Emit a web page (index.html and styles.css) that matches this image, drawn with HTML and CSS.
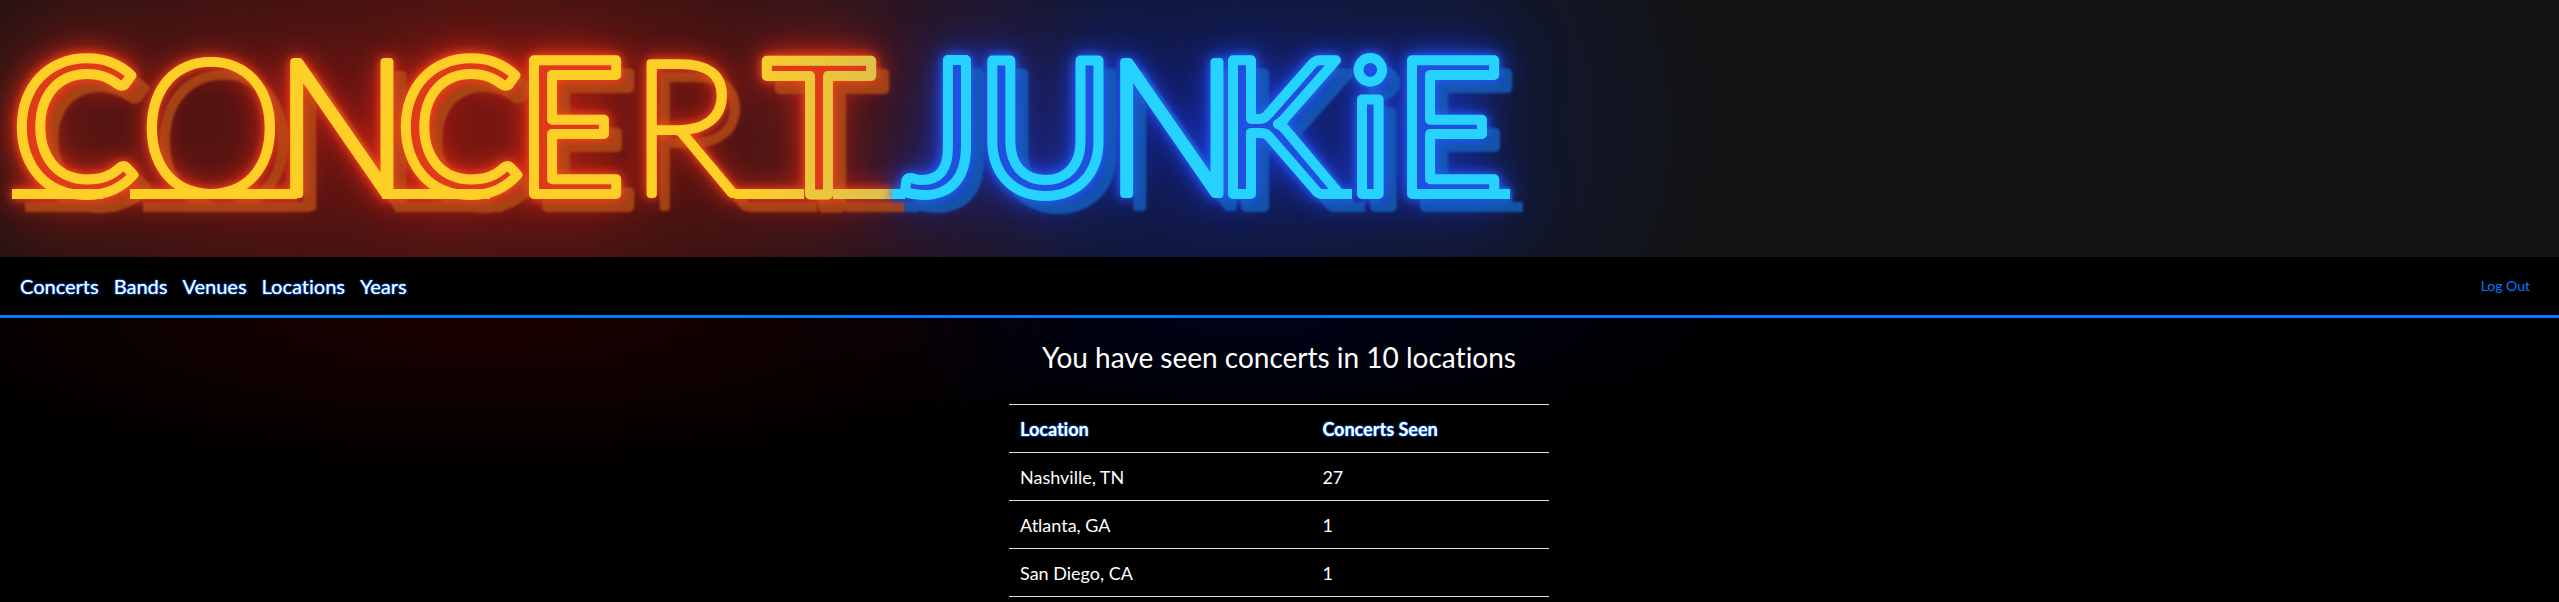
FILE: index.html
```html
<!DOCTYPE html>
<html lang="en">
<head>
<meta charset="utf-8">
<meta name="viewport" content="width=device-width, initial-scale=1">
<title>Concert Junkie</title>
<link rel="stylesheet" href="styles.css">
</head>
<body>
<header class="banner">
  <svg class="logo" viewBox="0 0 1560 257" role="img" aria-label="Concert Junkie">
    <defs>
      <linearGradient id="warm" gradientUnits="userSpaceOnUse" x1="740" y1="0" x2="900" y2="0">
        <stop offset="0" stop-color="#fdcf27"/>
        <stop offset="0.9" stop-color="#dcc04a"/>
        <stop offset="1" stop-color="#8fb08a"/>
      </linearGradient>
      <g id="concert">
        <text class="letters" y="194"><tspan class="tube" x="13">C</tspan><tspan class="thin" x="138">O</tspan><tspan class="thin narrow" x="276">N</tspan><tspan class="tube" x="397">C</tspan><tspan class="tube" x="517">E</tspan><tspan class="thin" x="629">R</tspan><tspan class="tube" x="764">T</tspan></text>
        <path class="link" d="M12 194H103M130 194H208M215 194H297M382 194H490M735 194H804M833 194H892"/>
      </g>
      <g id="junkie">
        <text class="letters" y="194"><tspan class="tube" x="903">J</tspan><tspan class="tube" x="977">U</tspan><tspan class="thin narrow" x="1106">N</tspan><tspan class="tube" x="1216">K</tspan><tspan class="tube" x="1348">i</tspan><tspan class="tube" x="1395">E</tspan></text>
        <path class="link" d="M892 194H905M1320 194H1352M1470 194H1510"/>
      </g>
    </defs>
    <g class="haze warm"><use href="#concert"/></g>
    <g class="haze cool"><use href="#junkie"/></g>
    <g class="halo warm"><use href="#concert"/></g>
    <g class="halo cool"><use href="#junkie"/></g>
    <g class="shade warm"><use href="#concert" x="13" y="13"/></g>
    <g class="shade cool"><use href="#junkie" x="13" y="13"/></g>
    <g class="neon warm"><use href="#concert"/></g>
    <g class="neon cool"><use href="#junkie"/></g>
  </svg>
</header>
<nav class="navbar">
  <ul class="menu">
    <li><a href="#concerts">Concerts</a></li>
    <li><a href="#bands">Bands</a></li>
    <li><a href="#venues">Venues</a></li>
    <li><a href="#locations">Locations</a></li>
    <li><a href="#years">Years</a></li>
  </ul>
  <a class="logout" href="#logout">Log Out</a>
</nav>
<main class="content">
  <h1 class="title">You have seen concerts in 10 locations</h1>
  <table class="locations">
    <thead>
      <tr><th scope="col">Location</th><th scope="col">Concerts Seen</th></tr>
    </thead>
    <tbody>
      <tr><td>Nashville, TN</td><td>27</td></tr>
      <tr><td>Atlanta, GA</td><td>1</td></tr>
      <tr><td>San Diego, CA</td><td>1</td></tr>
    </tbody>
  </table>
</main>
</body>
</html>
```

FILE: styles.css
```css
* { box-sizing: border-box; }

body {
  margin: 0;
  background: #000;
  color: #fff;
  font-family: Lato, "Liberation Sans", sans-serif;
  font-size: 18px;
  font-variant-ligatures: none;
  line-height: 24px;
}

.banner {
  overflow: hidden;
  background:
    radial-gradient(ellipse 680px 420px at 450px 125px, rgba(130, 20, 16, 0.7), rgba(96, 20, 18, 0.55) 50%, transparent),
    radial-gradient(ellipse 520px 420px at 1210px 125px, rgba(16, 30, 110, 0.7), rgba(16, 28, 80, 0.5) 55%, transparent),
    #131313;
}

.logo {
  display: block;
  width: 1560px;
  max-width: 100%;
  height: auto;
  overflow: visible;
}

.letters { font-family: Lato, sans-serif; }

.tube {
  font-size: 186px;
  font-weight: 400;
  stroke-width: 10px;
  stroke-linejoin: round;
}

.thin {
  font-size: 186px;
  font-weight: 100;
  fill: none;
  stroke-width: 8px;
  stroke-linejoin: round;
}

.narrow { font-family: Roboto, sans-serif; }

.link { fill: none; stroke-width: 10px; }

.warm { stroke: url(#warm); fill: #e03a1a; }
.cool { stroke: #26d3ff; fill: #2050e0; }

.neon.warm { filter: drop-shadow(0 0 5px #ff4a1c); }
.neon.cool { filter: drop-shadow(0 0 5px #2a62ff); }

.shade { filter: blur(1px); opacity: 0.85; }
.shade.warm { stroke: #b04a16; fill: #c83818; }
.shade.cool { stroke: #145cb8; fill: #1450c8; }

.halo { filter: blur(12px); }
.halo.warm { stroke: #f02c14; }
.halo.cool { stroke: #1c44f0; }

.haze { filter: blur(32px); }
.haze.warm { stroke: #c01810; }
.haze.cool { stroke: #1428c0; }

.navbar {
  display: flex;
  align-items: center;
  justify-content: space-between;
  min-height: 61px;
  padding: 0 29px 0 20px;
  border-bottom: 3px solid #007bff;
  background: #000;
}

.menu {
  display: flex;
  gap: 15px;
  margin: 0;
  padding: 0;
  list-style: none;
  font-size: 20px;
}

.menu a {
  color: #fff;
  text-decoration: none;
  text-shadow: 0 0 1px #007bff, 0 0 2px #007bff, 0 0 2px #0040ff;
}

.logout {
  color: #007bff;
  font-size: 14px;
  text-decoration: none;
}

.content {
  padding: 22px 17px 5px 16px;
  background:
    radial-gradient(ellipse 620px 160px at 480px 0, #1c0000, transparent),
    radial-gradient(ellipse 520px 120px at 1250px 0, #000318, transparent);
}

.title {
  margin: 0 0 30px;
  font-size: 28px;
  font-weight: 400;
  line-height: 34px;
  text-align: center;
}

.locations {
  width: 100%;
  max-width: 540px;
  margin: 0 auto;
  border-collapse: collapse;
  border-bottom: 1px solid #dee2e6;
  background: #000;
}

.locations th,
.locations td {
  height: 48px;
  padding: 0 11px;
  border-top: 1px solid #dee2e6;
  text-align: left;
}

.locations th:first-child { width: 56%; }

.locations th {
  text-shadow: 0 0 1px #007bff, 0 0 2px #007bff, 0 0 2px #0040ff;
}
```
